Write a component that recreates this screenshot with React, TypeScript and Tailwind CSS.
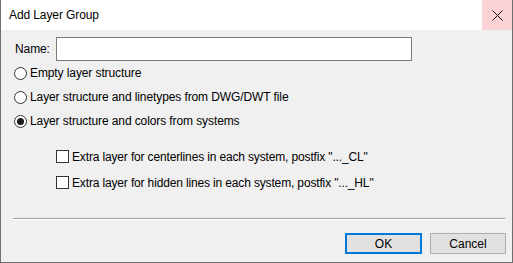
import React from "react";

const font = { fontFamily: '"Liberation Sans", Arial, sans-serif' };

function Radio({ checked, label }: { checked?: boolean; label: string }) {
  return (
    <div className="flex h-[24px] items-center">
      <div className="ml-[13px] flex h-[13px] w-[13px] items-center justify-center rounded-full border border-[#333333] bg-white">
        {checked && <div className="h-[7px] w-[7px] rounded-full bg-[#1a1a1a]" />}
      </div>
      <span className="ml-[3px] text-[12px] leading-none tracking-[-0.1px] text-black">{label}</span>
    </div>
  );
}

function Check({ label }: { label: string }) {
  return (
    <div className="flex h-[13px] items-center">
      <div className="ml-[55px] h-[13px] w-[13px] border border-[#333333] bg-white" />
      <span className="ml-[3px] text-[12px] leading-none tracking-[-0.15px] text-black">{label}</span>
    </div>
  );
}

export default function App() {
  return (
    <div
      style={font}
      className="flex h-[263px] w-[513px] flex-col border-x border-b border-[#6f6f6f] bg-[#f0f0f0] text-black"
    >
      <div className="flex h-[30px] shrink-0 items-center bg-white">
        <span className="ml-[8px] text-[12px] tracking-[-0.1px]">Add Layer Group</span>
        <div className="ml-auto flex h-full w-[30px] items-center justify-center bg-[#fbd2d6]">
          <svg width="11" height="11" viewBox="0 0 11 11">
            <path d="M0.5 0.5 L10.5 10.5 M10.5 0.5 L0.5 10.5" stroke="#111" strokeWidth="1" />
          </svg>
        </div>
      </div>
      <div className="flex flex-col">
        <div className="mt-[7px] flex h-[24px] items-center">
          <span className="ml-[14px] w-[41px] text-[12px] tracking-[-0.1px]">Name:</span>
          <div className="h-[24px] w-[356px] border border-[#7a7a7a] bg-white" />
        </div>
        <Radio label="Empty layer structure" />
        <Radio label="Layer structure and linetypes from DWG/DWT file" />
        <Radio checked label="Layer structure and colors from systems" />
        <div className="mt-[17px]">
          <Check label={'Extra layer for centerlines in each system, postfix "..._CL"'} />
        </div>
        <div className="mt-[13px]">
          <Check label={'Extra layer for hidden lines in each system, postfix "..._HL"'} />
        </div>
        <div className="ml-[12px] mr-[7px] mt-[29px] h-[2px] border-t border-b border-t-[#a0a0a0] border-b-white" />
        <div className="mr-[6px] mt-[13px] flex justify-end gap-[8px]">
          <button className="flex h-[21px] w-[77px] items-center justify-center border-2 border-[#0078d7] bg-[#e1e1e1] text-[12px]">
            OK
          </button>
          <button className="flex h-[21px] w-[76px] items-center justify-center border border-[#adadad] bg-[#e1e1e1] text-[12px]">
            Cancel
          </button>
        </div>
      </div>
    </div>
  );
}
